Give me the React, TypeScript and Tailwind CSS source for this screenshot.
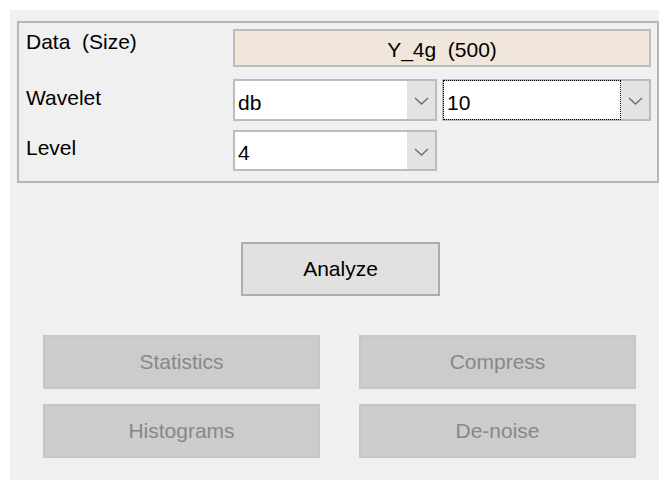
import type { ReactNode } from 'react';

const font = { fontFamily: '"Liberation Sans", Arial, sans-serif' };

function Chevron() {
	return (
		<svg width="15" height="8" viewBox="0 0 15 8" fill="none">
			<path d="M1 1 L7.5 7 L14 1" stroke="#6b6b6b" strokeWidth="1.3" />
		</svg>
	);
}

function Dropdown({ value, focused = false, width }: { value: string; focused?: boolean; width: string }) {
	return (
		<div className={`flex h-full border-2 border-[#bcbcbc] bg-white ${width}`}>
			<div className={`flex flex-1 items-center pl-[3px] pt-[5px] text-black ${focused ? 'm-[-1px] mr-0 border border-dotted border-black' : ''}`}>
				{value}
			</div>
			<div className="flex w-[28px] items-center justify-center bg-[#e3e3e3] pt-[2px]">
				<Chevron />
			</div>
		</div>
	);
}

function Row({ label, labelPad, height, children }: { label: string; labelPad: string; height: string; children: ReactNode }) {
	return (
		<div className={`flex ${height}`}>
			<div className={`w-[207px] shrink-0 leading-[21px] whitespace-pre text-black ${labelPad}`}>{label}</div>
			<div className="flex flex-1 gap-[5px]">{children}</div>
		</div>
	);
}

function GreyButton({ children }: { children: ReactNode }) {
	return (
		<div className="flex h-[54px] w-[277px] items-center justify-center border-2 border-[#c6c6c6] bg-[#cccccc] text-[#888888]">
			{children}
		</div>
	);
}

export default function App() {
	return (
		<div className="h-[480px] w-[659px] bg-white pl-[10px] pt-[10px] text-[21px]" style={font}>
			<div className="flex h-full flex-col bg-[#f0f0f0]">
				{/* parameter frame */}
				<div className="ml-[7px] mt-[11px] flex flex-col border-2 border-[#b6b6b6] pb-[10px] pl-[7px] pr-[6px] pt-[6px]">
					<Row label="Data  (Size)" labelPad="pt-[2px]" height="h-[38px]">
						<div className="flex h-full flex-1 items-center justify-center whitespace-pre border-2 border-[#bcbcbc] bg-[#f1e6da] pt-[4px] text-black">
							{'Y_4g  (500)'}
						</div>
					</Row>
					<div className="h-[12px]" />
					<Row label="Wavelet" labelPad="pt-[8px]" height="h-[42px]">
						<Dropdown value="db" width="w-[204px]" />
						<Dropdown value="10" focused width="flex-1" />
					</Row>
					<div className="h-[9px]" />
					<Row label="Level" labelPad="pt-[7px]" height="h-[41px]">
						<Dropdown value="4" width="w-[204px]" />
					</Row>
				</div>

				<div className="ml-[231px] mt-[59px] flex h-[54px] w-[199px] items-center justify-center border-2 border-[#adadad] bg-[#e1e1e1] text-black">
					Analyze
				</div>

				<div className="ml-[33px] mt-[39px] grid grid-cols-[277px_277px] gap-x-[39px] gap-y-[15px]">
					<GreyButton>Statistics</GreyButton>
					<GreyButton>Compress</GreyButton>
					<GreyButton>Histograms</GreyButton>
					<GreyButton>De-noise</GreyButton>
				</div>
			</div>
		</div>
	);
}
